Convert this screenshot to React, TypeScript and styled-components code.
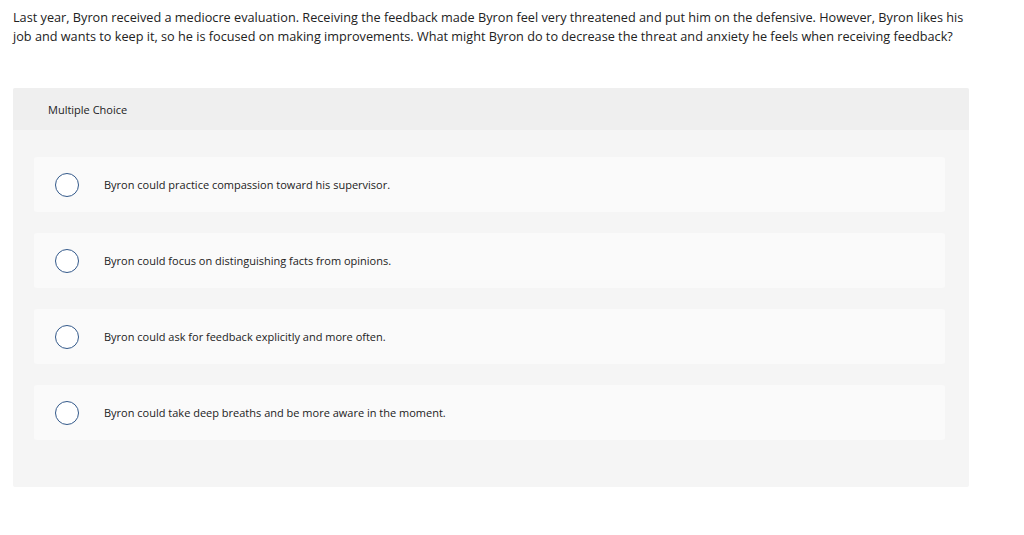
import { FC } from "react";
import styled, { createGlobalStyle } from "styled-components";

const GlobalStyle = createGlobalStyle`
  html, body {
    margin: 0;
    padding: 0;
    background: #ffffff;
  }
  body {
    font-family: "Open Sans", "Noto Sans", "Liberation Sans", sans-serif;
    color: #333333;
  }
`;

const Page = styled.div`
  padding: 8px 0 0 13px;
`;

const Question = styled.p`
  margin: 0;
  width: 955px;
  font-size: 12.7px;
  line-height: 19px;
  color: #222222;
`;

const Panel = styled.section`
  margin-top: 42px;
  width: 956px;
  background: #f5f5f5;
  border-radius: 2px;
  overflow: hidden;
`;

const PanelHeader = styled.div`
  height: 42px;
  display: flex;
  align-items: center;
  padding-left: 35px;
  background: #efefef;
  font-size: 11px;
  color: #222222;
`;

const OptionList = styled.div`
  display: flex;
  flex-direction: column;
  gap: 21px;
  padding: 27px 24px 47px 21px;
`;

const Option = styled.label`
  height: 55px;
  display: flex;
  align-items: center;
  background: #fafafa;
  border-radius: 3px;
  padding-left: 21px;
  cursor: pointer;
`;

const Radio = styled.span`
  width: 22px;
  height: 22px;
  border: 1px solid #33598a;
  border-radius: 50%;
  background: #ffffff;
  flex-shrink: 0;
`;

const OptionText = styled.span`
  margin-left: 25px;
  font-size: 11px;
  color: #222222;
`;

const options = [
  "Byron could practice compassion toward his supervisor.",
  "Byron could focus on distinguishing facts from opinions.",
  "Byron could ask for feedback explicitly and more often.",
  "Byron could take deep breaths and be more aware in the moment.",
];

const App: FC = () => {
  return (
    <Page>
      <GlobalStyle />
      <Question>
        Last year, Byron received a mediocre evaluation. Receiving the feedback made Byron feel very
        threatened and put him on the defensive. However, Byron likes his job and wants to keep it, so
        he is focused on making improvements. What might Byron do to decrease the threat and anxiety
        he feels when receiving feedback?
      </Question>
      <Panel>
        <PanelHeader>Multiple Choice</PanelHeader>
        <OptionList>
          {options.map((text) => (
            <Option key={text}>
              <Radio />
              <OptionText>{text}</OptionText>
            </Option>
          ))}
        </OptionList>
      </Panel>
    </Page>
  );
};

export default App;
